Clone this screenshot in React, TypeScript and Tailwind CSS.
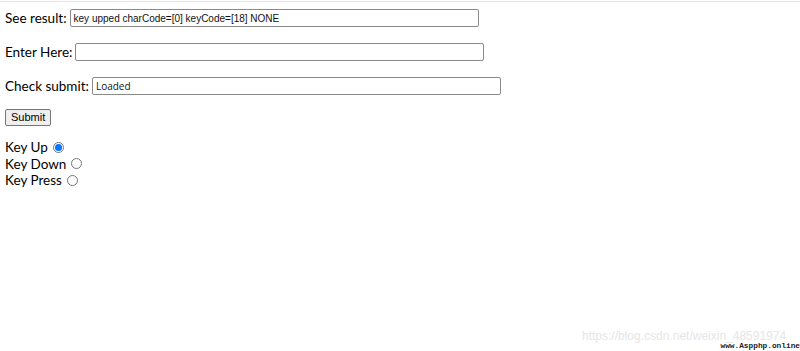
import * as React from 'react';

const Radio = ({ checked }: { checked?: boolean }) => (
    <span className="ml-[5px] inline-flex h-[11px] w-[11px] items-center justify-center rounded-full border border-[#767676] bg-white">
        {checked && <span className="h-[7px] w-[7px] rounded-full bg-[#0075ff]" />}
    </span>
);

const Field = ({ label, value, mono }: { label: string; value: string; mono?: boolean }) => (
    <div className="flex h-[18px] items-center">
        <span className="text-[13.5px] text-black">{label}</span>
        <div className={`ml-[3px] flex h-[18px] w-[409px] items-center border border-[#8a8a8a] rounded-[2px] bg-white pl-[3px] text-[#111] ${mono ? "font-['Liberation_Sans',sans-serif] text-[10px]" : "font-['Open_Sans',sans-serif] text-[10px]"}`}>
            {value}
        </div>
    </div>
);

export default function App() {
    return (
        <div className="relative h-[351px] w-[800px] overflow-hidden bg-white font-['Lato',sans-serif]">
            <div className="mt-px h-px w-full bg-[#e3e3e3]" />
            <div className="flex flex-col px-[5px] pt-[7px]">
                <Field label="See result:" value="key upped charCode=[0] keyCode=[18] NONE" mono />
                <div className="h-[16px]" />
                <Field label="Enter Here:" value="" />
                <div className="h-[16px]" />
                <Field label="Check submit:" value="Loaded" />
                <div className="h-[8px]" />
                <div>
                    <button className="h-[17px] rounded-[2px] border border-[#767676] bg-[#efefef] px-[5px] font-['Liberation_Sans',sans-serif] text-[11px] leading-none text-black">
                        Submit
                    </button>
                </div>
                <div className="mt-[12px] flex flex-col text-[13.5px] leading-[16.5px] text-black">
                    <label className="flex items-center">Key Up <Radio checked /></label>
                    <label className="flex items-center">Key Down <Radio /></label>
                    <label className="flex items-center">Key Press <Radio /></label>
                </div>
            </div>
            <span className="absolute left-[582px] top-[330px] whitespace-nowrap font-['Liberation_Sans',sans-serif] text-[12px] leading-[12px] text-[#e6e6e6]">https://blog.csdn.net/weixin_48591974</span>
            <span className="absolute right-0 top-[342px] whitespace-nowrap font-['Liberation_Mono',monospace] text-[7.8px] font-bold leading-[9px] text-[#222]">www.Aspphp.online</span>
        </div>
    );
}
